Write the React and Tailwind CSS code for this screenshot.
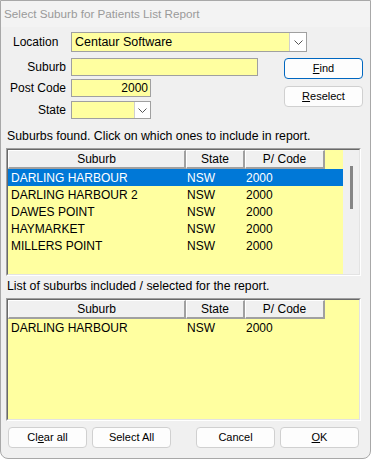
import React from "react";

const F = { fontFamily: '"Liberation Sans", Arial, sans-serif' };

function Chevron() {
  return (
    <svg width="9" height="5" viewBox="0 0 9 5" fill="none">
      <polyline points="0.5,0.5 4.5,4.5 8.5,0.5" stroke="#555" strokeWidth="1" />
    </svg>
  );
}

function Btn({ children, focus, className = "" }) {
  return (
    <div
      className={`h-[21px] w-[79px] flex items-center justify-center rounded-[4px] bg-[#fdfdfd] text-[11px] text-black border ${
        focus ? "border-[#0067c0]" : "border-[#d0d0d0]"
      } ${className}`}
    >
      {children}
    </div>
  );
}

function Header() {
  const cell = "h-full flex items-center justify-center bg-[#f0f0f0] border-t border-l border-t-white border-l-white border-r-2 border-b-2 border-r-[#a0a0a0] border-b-[#a0a0a0]";
  return (
    <div className="flex h-[19px]">
      <div className={`${cell} w-[178px]`}>Suburb</div>
      <div className={`${cell} w-[59px]`}>State</div>
      <div className={`${cell} w-[80px]`}>P/ Code</div>
    </div>
  );
}

function Row({ s, sel }) {
  return (
    <div className={`flex h-[17px] items-center ${sel ? "bg-[#0078d7] text-white" : "text-black"}`}>
      <div className="w-[178px] pl-[3px] whitespace-nowrap">{s}</div>
      <div className="w-[59px] pl-[1px]">NSW</div>
      <div className="w-[80px] pl-[1px]">2000</div>
    </div>
  );
}

function Frame({ children, h }) {
  return (
    <div className={`ml-[5px] w-[355px] ${h} border-t border-l border-t-[#a0a0a0] border-l-[#a0a0a0] border-b border-r border-b-white border-r-white`}>
      <div className="h-full w-full border-t border-l border-t-[#696969] border-l-[#696969] border-b border-r border-b-[#e3e3e3] border-r-[#e3e3e3] flex">
        {children}
      </div>
    </div>
  );
}

export default function App() {
  const rows = ["DARLING HARBOUR", "DARLING HARBOUR 2", "DAWES POINT", "HAYMARKET", "MILLERS POINT"];
  return (
    <div style={F} className="w-[371px] h-[459px] bg-[#f0f0f0] border border-[#a8a8a8] rounded-b-[8px] flex flex-col text-[12px] text-black overflow-hidden">
      <div className="h-[26px] shrink-0 pl-[3px] flex items-center text-[11.7px] text-[#9a9a9a] bg-[#f3f3f3]">
        Select Suburb for Patients List Report
      </div>

      {/* Location row */}
      <div className="mt-[5px] flex h-[20px] items-center">
        <div className="w-[70px] pl-[12px] text-[12px]">Location</div>
        <div className="w-[236px] h-full border border-[#a0a0a0] bg-[#ffffa0] flex items-center">
          <div className="flex-1 pl-[3px] text-[12.5px]">Centaur Software</div>
          <div className="w-[17px] h-full bg-white border-l border-[#d0d0d0] flex items-center justify-center">
            <Chevron />
          </div>
        </div>
      </div>

      {/* Inputs + buttons */}
      <div className="mt-[6px] flex">
        <div className="flex flex-col">
          <div className="flex h-[18px] items-center">
            <div className="w-[65px] text-right">Suburb</div>
            <div className="ml-[5px] w-[187px] h-full border border-[#a0a0a0] bg-[#ffffa0]" />
          </div>
          <div className="mt-[3px] flex h-[18px] items-center">
            <div className="w-[65px] text-right">Post Code</div>
            <div className="ml-[5px] w-[80px] h-full border border-[#a0a0a0] bg-[#ffffa0] flex items-center justify-end pr-[2px]">2000</div>
          </div>
          <div className="mt-[4px] flex h-[18px] items-center">
            <div className="w-[65px] text-right">State</div>
            <div className="ml-[5px] w-[80px] h-full border border-[#a0a0a0] bg-[#ffffa0] flex justify-end">
              <div className="w-[16px] h-full bg-white border-l border-[#d0d0d0] flex items-center justify-center">
                <Chevron />
              </div>
            </div>
          </div>
        </div>
        <div className="ml-auto mr-[7px] flex flex-col">
          <Btn focus>
            <span><u>F</u>ind</span>
          </Btn>
          <Btn className="mt-[7px]">
            <span><u>R</u>eselect</span>
          </Btn>
        </div>
      </div>

      <div className="mt-[10px] h-[14px] leading-[14px] pl-[6px] whitespace-nowrap text-[12.3px]">
        Suburbs found. Click on which ones to include in report.
      </div>

      <div className="mt-[5px]">
        <Frame h="h-[128px]">
          <div className="w-[335px] h-full bg-[#ffffa0] flex flex-col">
            <Header />
            {rows.map((r, i) => (
              <Row key={r} s={r} sel={i === 0} />
            ))}
          </div>
          <div className="flex-1 h-full bg-[#f0f0f0] flex justify-center pt-[16px]">
            <div className="w-[3px] h-[43px] bg-[#858585]" />
          </div>
        </Frame>
      </div>

      <div className="mt-[3px] h-[14px] leading-[14px] pl-[6px] whitespace-nowrap text-[12.3px]">
        List of suburbs included / selected for the report.
      </div>

      <div className="mt-[5px]">
        <Frame h="h-[123px]">
          <div className="flex-1 h-full bg-[#ffffa0] flex flex-col">
            <Header />
            <Row s="DARLING HARBOUR" />
          </div>
        </Frame>
      </div>

      <div className="mt-[6px] flex pl-[7px]">
        <Btn>
          <span>Cl<u>e</u>ar all</span>
        </Btn>
        <Btn className="ml-[5px]">Select All</Btn>
        <Btn className="ml-[25px]">Cancel</Btn>
        <Btn className="ml-[5px]">
          <span><u>O</u>K</span>
        </Btn>
      </div>
    </div>
  );
}
